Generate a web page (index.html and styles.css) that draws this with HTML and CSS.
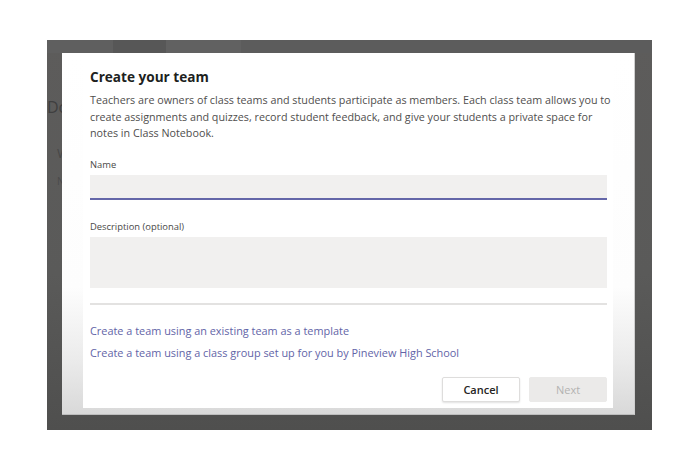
FILE: index.html
```html
<!DOCTYPE html>
<html lang="en">
<head>
<meta charset="utf-8">
<title>Create your team</title>
<link rel="stylesheet" href="styles.css">
</head>
<body>
<div class="backdrop">
  <div class="bg-tabs">
    <span class="tab t1"></span><span class="tab t2"></span><span class="tab t3"></span><span class="tab t4"></span>
  </div>
  <div class="bg-content">
    <div class="bg-title">Do</div>
    <div class="bg-sub">W</div>
    <div class="bg-small">N</div>
  </div>

  <div class="dialog" role="dialog" aria-labelledby="dlg-title">
    <div class="panel">
      <h1 class="title" id="dlg-title">Create your team</h1>
      <p class="intro">Teachers are owners of class teams and students participate as members. Each class team allows you to<br>create assignments and quizzes, record student feedback, and give your students a private space for<br>notes in Class Notebook.</p>

      <label class="field-label" for="name">Name</label>
      <div class="input name-input" id="name"></div>

      <label class="field-label desc-label" for="desc">Description (optional)</label>
      <div class="input desc-input" id="desc"></div>

      <div class="divider"></div>

      <a class="link first" href="#">Create a team using an existing team as a template</a>
      <a class="link" href="#">Create a team using a class group set up for you by Pineview High School</a>

      <div class="actions">
        <button class="btn cancel">Cancel</button>
        <button class="btn next" disabled>Next</button>
      </div>
    </div>
  </div>
</div>
</body>
</html>
```

FILE: styles.css
```css
html, body {
  margin: 0;
  padding: 0;
  background: #ffffff;
}

body {
  font-family: "Open Sans", "Noto Sans", "Liberation Sans", sans-serif;
  padding-top: 40px;
  padding-left: 47px;
}

.backdrop {
  position: relative;
  width: 605px;
  height: 390px;
  background: linear-gradient(to bottom, #5d5c5b 0%, #5a5a59 60%, #4f4f4e 100%);
  overflow: hidden;
}

.bg-tabs {
  display: flex;
  height: 13px;
}

.tab { display: block; height: 100%; }
.t1 { width: 66px; background: #5f5f5f; }
.t2 { width: 53px; background: #575757; }
.t3 { width: 75px; background: #616161; }
.t4 { flex: 1; background: #5c5c5c; }

.bg-content {
  padding: 44px 0 0 0;
  color: #3f3f3f;
}

.bg-title {
  font-size: 16px;
  line-height: 20px;
}

.bg-sub {
  font-size: 13px;
  line-height: 16px;
  margin-top: 28px;
  margin-left: 10px;
  color: #474747;
}

.bg-small {
  font-size: 10px;
  line-height: 12px;
  margin-top: 14px;
  margin-left: 10px;
  color: #4a4a4a;
}

.dialog {
  position: absolute;
  left: 15px;
  top: 13px;
  width: 573px;
  height: 362px;
  box-sizing: border-box;
  padding: 0 21px 6px 21px;
  display: flex;
  flex-direction: column;
  background: linear-gradient(to bottom, #ffffff 0%, #fdfdfd 65%, #ebebeb 85%, #d9d9d9 100%);
  border-right: 1px solid #cfcfcf;
  border-bottom: 1px solid #bdbdbd;
}

.panel {
  flex: 1;
  background: #ffffff;
  padding: 14px 6px 0 7px;
  display: flex;
  flex-direction: column;
}

.title {
  margin: 0;
  font-size: 13.6px;
  line-height: 20px;
  font-weight: 700;
  color: #201f1e;
}

.intro {
  margin: 5px 0 0 0;
  font-size: 10.75px;
  line-height: 16.5px;
  color: #4f4e4d;
  white-space: nowrap;
}

.field-label {
  display: block;
  margin-top: 16px;
  font-size: 9.4px;
  line-height: 14px;
  color: #4a4948;
}

.desc-label {
  margin-top: 20px;
}

.input {
  margin-top: 3px;
  background: #f1f0ef;
  box-sizing: border-box;
}

.name-input {
  height: 25px;
  border-bottom: 2px solid #6466a8;
}

.desc-input {
  height: 51px;
}

.divider {
  margin-top: 15px;
  height: 2px;
  background: #e3e2e1;
}

.link {
  display: block;
  font-size: 10.9px;
  line-height: 18px;
  color: #6264a7;
  text-decoration: none;
  margin-top: 4px;
}

.link.first {
  margin-top: 17px;
}

.actions {
  margin-top: 15px;
  display: flex;
  justify-content: flex-end;
  gap: 9px;
}

.btn {
  width: 78px;
  height: 25px;
  box-sizing: border-box;
  font-family: "Open Sans", "Noto Sans", "Liberation Sans", sans-serif;
  font-size: 11px;
  font-weight: 600;
  padding: 0;
}

.cancel {
  background: #ffffff;
  border: 1px solid #dedddc;
  border-radius: 2px;
  color: #252423;
  box-shadow: 0 1px 2px rgba(0, 0, 0, 0.12);
}

.next {
  background: #ebeae9;
  border: 1px solid #ebeae9;
  border-radius: 2px;
  color: #b3b2b1;
  font-weight: 400;
}
```
